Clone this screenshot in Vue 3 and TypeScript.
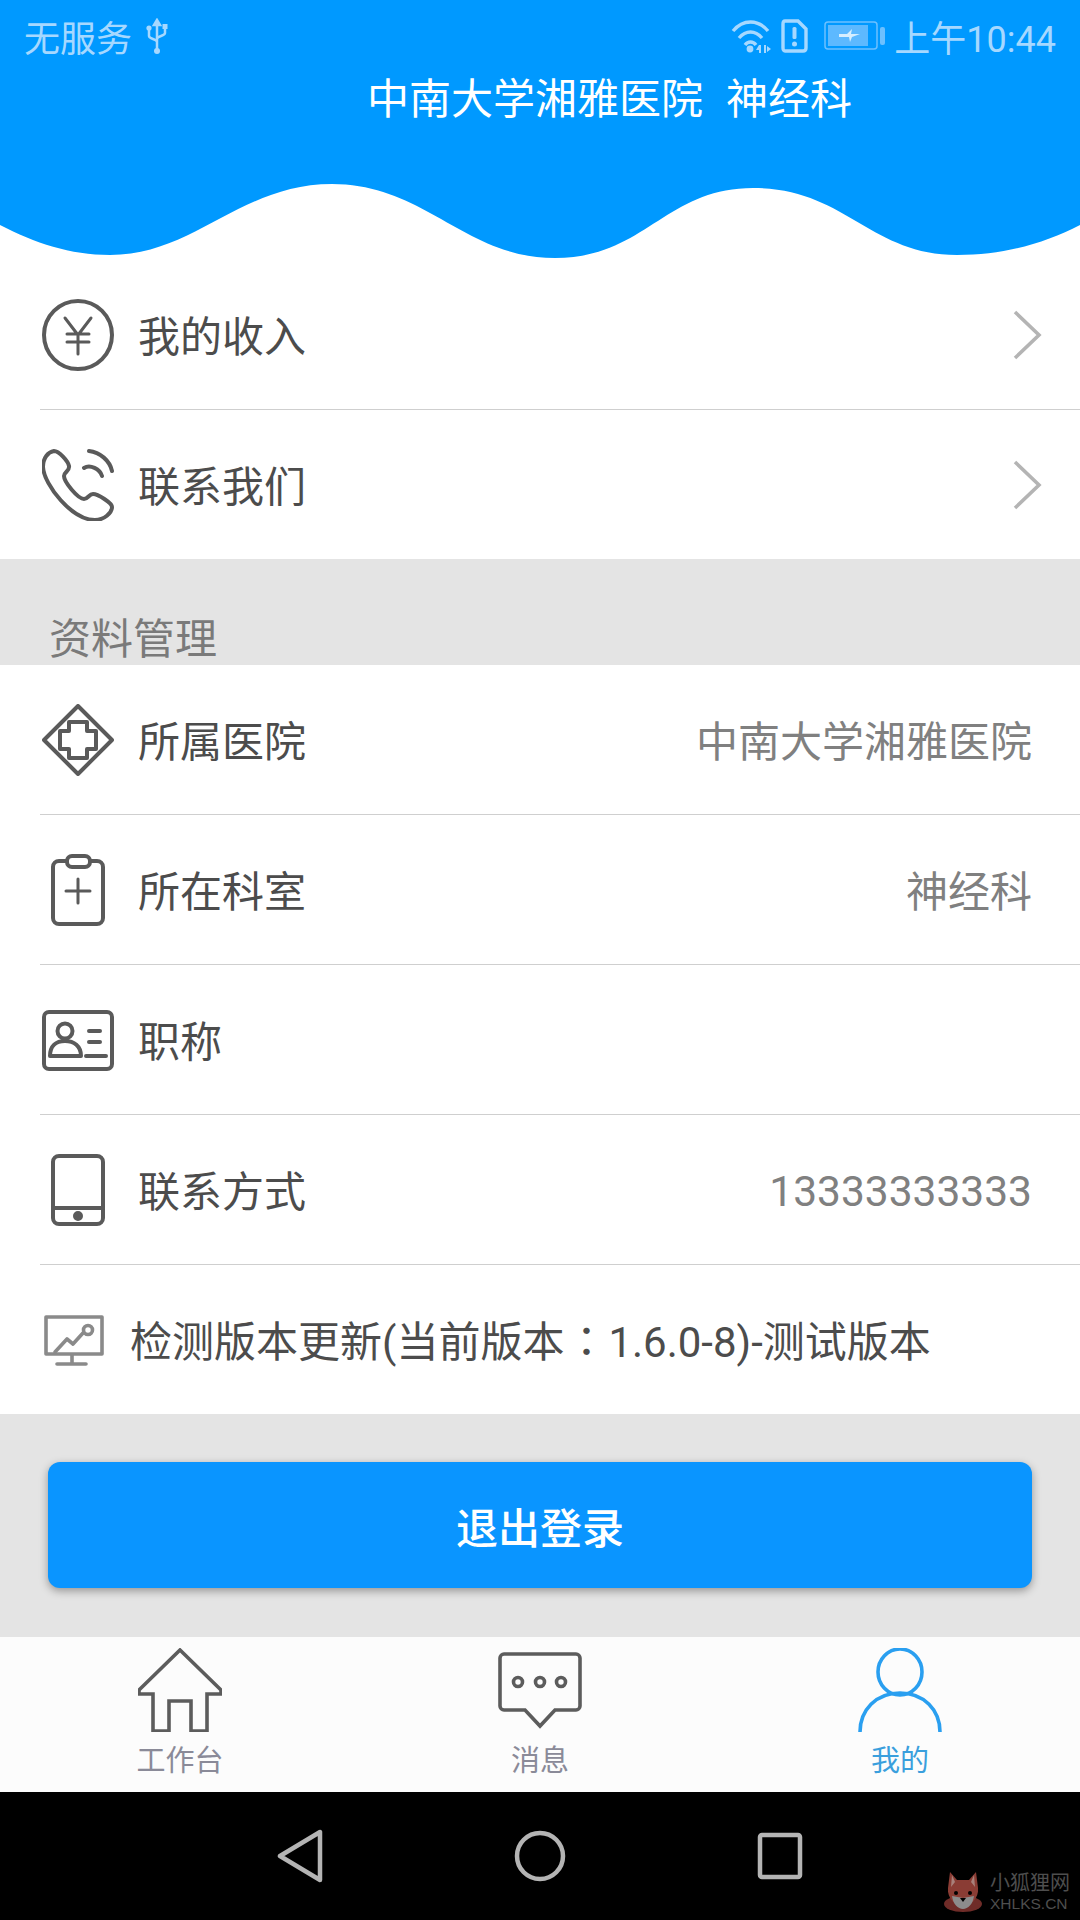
<template>
  <div class="page">
    <header class="top">
      <svg class="wave" width="1080" height="270" viewBox="0 0 1080 270">
        <path
          d="M0 225C35 243 70 255 110 255C195 255 240 184 332 184C425 184 465 258 555 258C645 258 665 188 753 188C845 188 870 255 957 255C1005 255 1045 243 1080 225V0H0Z"
          fill="#0099ff"
        />
      </svg>
      <div class="status">
        <span class="status-left">
          无服务
          <svg class="usb" width="22" height="36" viewBox="0 0 22 36">
            <path d="M11 2V34M11 2L8 7H14ZM3 12V18C3 21 11 21 11 24M19 10V15C19 18 11 18 11 21" fill="none" stroke="#a6d8ff" stroke-width="2.5" />
            <circle cx="3" cy="10" r="2.6" fill="#a6d8ff" />
            <rect x="16.5" y="6" width="5" height="5" fill="#a6d8ff" />
            <circle cx="11" cy="33" r="3" fill="#a6d8ff" />
          </svg>
        </span>
        <span class="status-right">
          <svg width="40" height="36" viewBox="0 0 40 36">
            <g fill="none" stroke="#a6d8ff" stroke-width="3.4">
              <path d="M2 13C12 1 27 1 37 13" />
              <path d="M8 20C15 12 24 12 31 20" />
              <path d="M14 27C17 23 22 23 25 27" />
            </g>
            <circle cx="19" cy="31" r="3.4" fill="#a6d8ff" />
            <path d="M28 27L25 32H28V35H30V27ZM33 27H35V35H33ZM36 28L40 31L36 34Z" fill="#a6d8ff" />
          </svg>
          <svg class="sim" width="27" height="34" viewBox="0 0 27 34">
            <path d="M4 2H17L25 10V29C25 31 24 32 22 32H4C3 32 2 31 2 29V5C2 3 3 2 4 2Z" fill="none" stroke="#a6d8ff" stroke-width="3.4" />
            <rect x="11.5" y="8" width="4" height="12" rx="1.5" fill="#a6d8ff" />
            <circle cx="13.5" cy="25" r="2.5" fill="#a6d8ff" />
          </svg>
          <svg class="battery" width="62" height="30" viewBox="0 0 62 30">
            <rect x="1" y="1" width="52" height="27" rx="3" fill="none" stroke="#6cc0ff" stroke-width="1.5" />
            <rect x="4" y="4" width="40" height="21" fill="#5db9ff" />
            <path d="M15 13H23L28 8L27 13H36L28 16L26 21L25 16H15Z" fill="#d6eeff" />
            <rect x="56" y="6" width="5" height="18" rx="2" fill="#6cc0ff" />
          </svg>
          <span class="clock">上午10:44</span>
        </span>
      </div>
      <div class="title">
        <span>中南大学湘雅医院</span>
        <span>神经科</span>
      </div>
    </header>

    <section class="list">
      <div class="row">
        <svg class="icon" viewBox="0 0 72 72">
          <circle cx="36" cy="36" r="34" />
          <path class="thin" d="M23 19L36 36L49 19M25 35H47M25 43H47M36 36V55" />
        </svg>
        <span class="label">我的收入</span>
        <svg class="chevron" width="30" height="50" viewBox="0 0 30 50">
          <path d="M3 2L27 25L3 48" />
        </svg>
      </div>
      <div class="row">
        <svg class="icon" viewBox="0 0 72 72">
          <path d="M12 2C6 3 1 9 1 18C2 36 30 71 53 71C62 71 70 64 70 58C70 54 56 45 51 45C47 45 46 50 42 50C36 50 22 33 22 27C22 23 28 22 27 17C26 12 17 2 12 2Z" />
          <path d="M47 2C58 3 68 12 70 22M42 19C48 15 58 20 60 27" />
        </svg>
        <span class="label">联系我们</span>
        <svg class="chevron" width="30" height="50" viewBox="0 0 30 50">
          <path d="M3 2L27 25L3 48" />
        </svg>
      </div>
    </section>

    <div class="section-head">资料管理</div>

    <section class="list">
      <div class="row">
        <svg class="icon" viewBox="0 0 72 72">
          <path d="M36 2L70 36L36 70L2 36Z" />
          <path d="M27 18H45V27H54V45H45V54H27V45H18V27H27Z" />
        </svg>
        <span class="label">所属医院</span>
        <span class="value">中南大学湘雅医院</span>
      </div>
      <div class="row">
        <svg class="icon" viewBox="0 0 72 72">
          <rect x="11" y="7" width="50" height="63" rx="6" />
          <rect x="25" y="2" width="23" height="11" rx="5" fill="#fff" />
          <path class="thin" d="M24 37H48M36 25V49" />
        </svg>
        <span class="label">所在科室</span>
        <span class="value">神经科</span>
      </div>
      <div class="row">
        <svg class="icon" viewBox="0 0 72 72">
          <rect x="2" y="8" width="68" height="57" rx="5" />
          <circle cx="23" cy="27" r="7.5" />
          <path d="M8 52C8 42 14 37 23 37C32 37 39 42 39 52ZM47 27H58M47 38H58M44 52H64" />
        </svg>
        <span class="label">职称</span>
      </div>
      <div class="row">
        <svg class="icon" viewBox="0 0 72 72">
          <rect x="11" y="2" width="50" height="68" rx="6" />
          <path d="M11 54H61" />
          <circle class="solid" cx="36" cy="62" r="3" />
        </svg>
        <span class="label">联系方式</span>
        <span class="value phone">13333333333</span>
      </div>
      <div class="row row-last">
        <svg class="icon icon-light" viewBox="0 0 72 72">
          <path d="M4 13H60V50H4ZM30 50V60M15 60H44" />
          <path d="M13 48L25 35L31 40L41 29" />
          <circle cx="46" cy="26" r="4.5" />
        </svg>
        <span class="label">检测版本更新(当前版本<span class="colon">：</span>1.6.0-8)-测试版本</span>
      </div>
    </section>

    <div class="logout-wrap">
      <button class="logout">退出登录</button>
    </div>

    <nav class="tabs">
      <div class="tab">
        <svg width="84" height="84" viewBox="0 0 84 84">
          <path d="M42 2L83 42V46H69V83H53V53H31V83H15V46H1V42Z" />
        </svg>
        <span>工作台</span>
      </div>
      <div class="tab">
        <svg width="84" height="84" viewBox="0 0 84 84">
          <path d="M6 6H78C80 6 82 8 82 10V58C82 60 80 62 78 62H57L42 78L27 62H6C4 62 2 60 2 58V10C2 8 4 6 6 6Z" />
          <circle cx="20" cy="34" r="4.5" />
          <circle cx="42" cy="34" r="4.5" />
          <circle cx="63" cy="34" r="4.5" />
        </svg>
        <span>消息</span>
      </div>
      <div class="tab tab-on">
        <svg width="84" height="84" viewBox="0 0 84 84">
          <ellipse cx="42" cy="24" rx="22" ry="23" />
          <path d="M2 84C2 62 18 45 42 45C66 45 82 62 82 84" />
        </svg>
        <span>我的</span>
      </div>
    </nav>

    <footer class="sysnav">
      <svg width="60" height="54" viewBox="0 0 60 54">
        <path d="M50 3V51L10 27Z" />
      </svg>
      <svg width="60" height="54" viewBox="0 0 60 54">
        <circle cx="30" cy="27" r="23" />
      </svg>
      <svg width="60" height="54" viewBox="0 0 60 54">
        <rect x="10" y="6" width="40" height="42" rx="2" />
      </svg>
      <div class="mark">
        <svg class="fox" width="40" height="40" viewBox="0 0 40 40">
          <ellipse cx="20" cy="32" rx="19" ry="8" fill="#6f2c28" />
          <path d="M7 0L14 8H26L33 0L35 16C36 26 28 34 20 34C12 34 4 26 5 16Z" fill="#8a3c34" />
          <path d="M9 3L12 10L8 15ZM31 3L28 10L32 15Z" fill="#a8807a" />
          <path d="M9 24L20 26L31 24C30 32 25 37 20 37C15 37 10 32 9 24Z" fill="#8c8c8c" />
          <circle cx="13" cy="21" r="2" fill="#000" />
          <circle cx="27" cy="21" r="2" fill="#000" />
          <path d="M17 26H23L20 30Z" fill="#000" />
        </svg>
        <div class="mark-text">
          <span class="mark-cn">小狐狸网</span>
          <span class="mark-en">XHLKS.CN</span>
        </div>
      </div>
    </footer>
  </div>
</template>

<script setup lang="ts">
</script>

<style>
html,
body {
  margin: 0;
  background: #000;
}
</style>

<style scoped>
.page {
  width: 1080px;
  height: 1920px;
  display: flex;
  flex-direction: column;
  overflow: hidden;
  background: #e4e4e4;
  font-family: Roboto, "Noto Sans CJK SC", sans-serif;
}

.top {
  position: relative;
  height: 260px;
  flex: none;
  background: #fff;
}

.wave {
  position: absolute;
  top: 0;
  left: 0;
}

.status {
  position: relative;
  height: 72px;
  padding: 0 24px;
  display: flex;
  align-items: center;
  justify-content: space-between;
  color: #a6d8ff;
  font-size: 36px;
}

.status-left {
  display: flex;
  align-items: center;
  gap: 14px;
}

.status-right {
  display: flex;
  align-items: center;
}

.sim {
  margin-left: 10px;
}

.battery {
  margin-left: 16px;
}

.clock {
  margin-left: 8px;
}

.title {
  position: relative;
  margin: 3px 0 0 367px;
  display: flex;
  gap: 23px;
  color: #fff;
  font-size: 42px;
  line-height: 50px;
}

.list {
  flex: none;
  background: #fff;
}

.row {
  height: 150px;
  box-sizing: border-box;
  margin-left: 40px;
  padding: 0 48px 0 2px;
  display: flex;
  align-items: center;
  gap: 24px;
  border-bottom: 1.5px solid #cfcfcf;
  color: #4c4c4c;
  font-size: 42px;
}

.list > .row:last-child {
  border-bottom: 0;
  height: 149px;
}

.label,
.value {
  margin-bottom: 3px;
}

.icon {
  width: 72px;
  height: 72px;
  flex: none;
  fill: none;
  stroke: #5a5a5a;
  stroke-width: 4;
  stroke-linejoin: round;
  stroke-linecap: round;
}

.icon .solid {
  fill: #5a5a5a;
}

.icon .thin {
  stroke-width: 3;
}

.icon-light {
  stroke: #8a8a8a;
  stroke-width: 3.6;
}

.row-last {
  gap: 16px;
}

.colon {
  margin: 0 1px;
  font-family: "Noto Sans CJK TC", sans-serif;
}

.chevron {
  margin-left: auto;
  margin-right: -10px;
  fill: none;
  stroke: #b4b4b4;
  stroke-width: 3.6;
}

.value {
  margin-left: auto;
  color: #808080;
}

.phone {
  margin-bottom: 0;
  margin-top: 3px;
  font-size: 42.5px;
}

.section-head {
  height: 106px;
  box-sizing: border-box;
  flex: none;
  padding: 56px 0 0 49px;
  color: #7a7a7a;
  font-size: 42px;
  line-height: 50px;
}

.logout-wrap {
  flex: 1;
  padding: 48px 48px 0;
}

.logout {
  width: 100%;
  height: 126px;
  border: 0;
  border-radius: 12px;
  background: #0a95ff;
  box-shadow: 0 3px 8px rgba(0, 0, 0, 0.35);
  color: #fff;
  font-family: inherit;
  font-weight: 500;
  font-size: 42px;
}

.tabs {
  height: 155px;
  flex: none;
  display: grid;
  grid-template-columns: repeat(3, 1fr);
  background: #fcfcfc;
}

.tab {
  padding-top: 11px;
  display: flex;
  flex-direction: column;
  align-items: center;
  color: #8a8a98;
  font-size: 29px;
  line-height: 42px;
}

.tab span {
  margin-top: 8px;
}

.tab svg {
  display: block;
  flex: none;
  fill: none;
  stroke: #5c5c5c;
  stroke-width: 3.6;
}

.tab-on {
  color: #3a9fdd;
}

.tab-on svg {
  stroke: #2a9ff0;
}

.sysnav {
  position: relative;
  height: 128px;
  flex: none;
  display: flex;
  align-items: center;
  justify-content: center;
  gap: 180px;
  background: #000;
}

.sysnav > svg {
  fill: none;
  stroke: #b4b4b4;
  stroke-width: 4.5;
  stroke-linejoin: round;
}

.mark {
  position: absolute;
  right: 10px;
  bottom: 7px;
  display: flex;
  align-items: center;
  gap: 7px;
}

.mark-text {
  display: flex;
  flex-direction: column;
  color: #4e4e4e;
}

.mark-cn {
  font-size: 20px;
  line-height: 24px;
}

.mark-en {
  font-family: "Liberation Sans", sans-serif;
  font-size: 15.5px;
  line-height: 18px;
}
</style>
